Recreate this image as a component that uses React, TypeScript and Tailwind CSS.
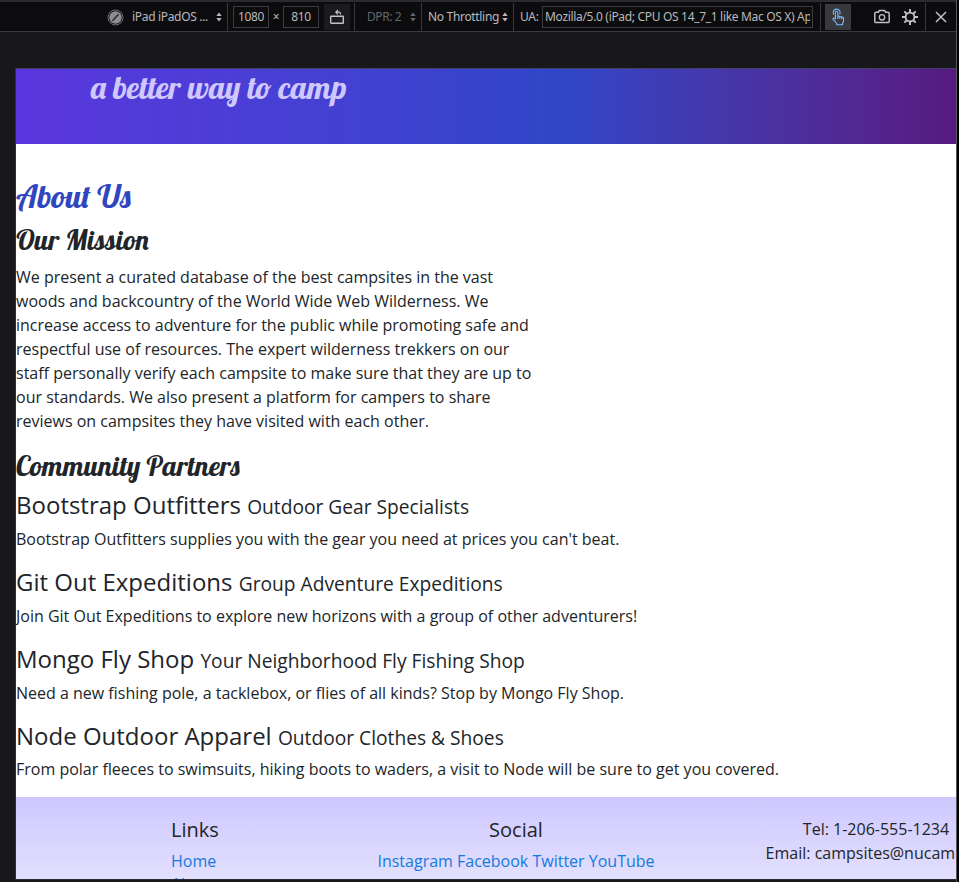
import type { ReactNode } from "react";

const SCRIPT = "font-['Lobster','Liberation_Serif',serif] font-medium";

const partners = [
  { name: "Bootstrap Outfitters", tag: "Outdoor Gear Specialists", text: "Bootstrap Outfitters supplies you with the gear you need at prices you can't beat." },
  { name: "Git Out Expeditions", tag: "Group Adventure Expeditions", text: "Join Git Out Expeditions to explore new horizons with a group of other adventurers!" },
  { name: "Mongo Fly Shop", tag: "Your Neighborhood Fly Fishing Shop", text: "Need a new fishing pole, a tacklebox, or flies of all kinds? Stop by Mongo Fly Shop." },
  { name: "Node Outdoor Apparel", tag: "Outdoor Clothes & Shoes", text: "From polar fleeces to swimsuits, hiking boots to waders, a visit to Node will be sure to get you covered." },
];

const mission = [
  "We present a curated database of the best campsites in the vast",
  "woods and backcountry of the World Wide Web Wilderness. We",
  "increase access to adventure for the public while promoting safe and",
  "respectful use of resources. The expert wilderness trekkers on our",
  "staff personally verify each campsite to make sure that they are up to",
  "our standards. We also present a platform for campers to share",
  "reviews on campsites they have visited with each other.",
];

function Sort() {
  return (
    <svg width="6" height="10" viewBox="0 0 6 10" fill="currentColor" className="shrink-0">
      <path d="M3 0.5 5.7 4H.3zM3 9.5 .3 6h5.4z" />
    </svg>
  );
}

function Divider() {
  return <div className="h-7 w-px shrink-0 self-end bg-[#38383d]" />;
}

function Field({ children, className }: { children: ReactNode; className: string }) {
  return (
    <div className={`flex h-[22px] shrink-0 items-center overflow-hidden border border-[#3c3c42] bg-[#0c0c0d] ${className}`}>
      {children}
    </div>
  );
}

function Toolbar() {
  return (
    <div className="h-8 shrink-0 border-t-2 border-b border-t-[#2a2a30] border-b-[#3a3a3e] bg-[#0c0c0f] font-['Noto_Sans','Open_Sans',sans-serif] text-[12px] tracking-[-0.32px] whitespace-nowrap text-[#b9b9bc]">
      <div className="flex h-[29px] items-center pt-px pl-[107px]">
        <svg width="17" height="17" viewBox="0 0 17 17" fill="none" className="shrink-0">
          <circle cx="8.5" cy="8.5" r="7.5" stroke="#77777a" strokeWidth="1" />
          <circle cx="8.5" cy="8.5" r="6.2" fill="#8e8e90" />
          <path d="M5.5 11.8 11.5 5.2" stroke="#2a2a2d" strokeWidth="1.5" />
        </svg>
        <span className="w-[85px] pl-2">iPad iPadOS ...</span>
        <div className="w-[18px] pl-[7px]"><Sort /></div>
        <Divider />
        <Field className="ml-[5px] w-9 justify-center">1080</Field>
        <span className="w-[14px] text-center">×</span>
        <Field className="w-9 justify-center">810</Field>
        <div className="ml-[5px] flex h-[26px] w-[26px] shrink-0 items-center justify-center bg-[#1b1b1f]">
          <svg width="16" height="16" viewBox="0 0 16 16" fill="none" stroke="#c2c2c4" strokeWidth="1.4">
            <rect x="1.7" y="7.2" width="12.6" height="7.1" rx=".6" />
            <path d="M11.6 5.6V4.9q0-1.7-1.8-1.7H7M9 1 6.8 3.2 9 5.2" strokeWidth="1.2" />
          </svg>
        </div>
        <div className="w-[4px] shrink-0" />
        <Divider />
        <span className="w-[43px] shrink-0 pl-3 tracking-[-0.4px] text-[#65656a]">DPR: 2</span>
        <div className="w-[23px] shrink-0 pl-3 text-[#65656a]"><Sort /></div>
        <Divider />
        <span className="w-[80px] shrink-0 pl-[6px]">No Throttling</span>
        <div className="w-[11px] shrink-0"><Sort /></div>
        <Divider />
        <span className="w-[28px] shrink-0 pl-[6px]">UA:</span>
        <Field className="w-[271px] px-[2px]">
          <span className="block w-[265px] overflow-hidden">Mozilla/5.0 (iPad; CPU OS 14_7_1 like Mac OS X) Ap</span>
        </Field>
        <div className="w-[7px] shrink-0" />
        <Divider />
        <div className="ml-1 flex h-[26px] w-[26px] shrink-0 items-center justify-center bg-[#38383d]">
          <svg width="16" height="18" viewBox="0 0 16 18" fill="none" stroke="#75baff" strokeWidth="1.1" strokeLinejoin="round" strokeLinecap="round">
            <path d="M5.4 11V4.4a1.2 1.2 0 0 1 2.4 0V8.4q1-.7 1.9.3 1.2-.5 1.9.4 1.7-.3 1.9 1.3v2.6q0 1.4-1 2.5v1.2H6.8v-1.2L3.2 11.6q-.7-1.2.4-1.6.8-.2 1.8 1M7.8 8.4v2M9.8 8.8v1.7M11.7 9.2v1.5" />
            <path d="M3.6 6.3a3.5 3.5 0 1 1 6.2-.2" />
          </svg>
        </div>
        <svg width="18" height="16" viewBox="0 0 18 16" fill="none" stroke="#c0c0c3" strokeWidth="1.5" className="ml-[22px] shrink-0">
          <path d="M3 3.2h2.4l1-1.6h5.2l1 1.6H15q1.2 0 1.2 1.2v8q0 1.2-1.2 1.2H3q-1.2 0-1.2-1.2v-8Q1.8 3.2 3 3.2z" />
          <circle cx="9" cy="8.3" r="2.7" strokeWidth="1.3" />
        </svg>
        <svg width="18" height="18" viewBox="0 0 18 18" fill="none" stroke="#c4c4c7" className="ml-[10px] shrink-0">
          <circle cx="9" cy="9" r="4.4" strokeWidth="1.8" />
          <path d="M9 1v3M9 14v3M1 9h3M14 9h3M3.3 3.3l2.2 2.2M12.5 12.5l2.2 2.2M14.7 3.3l-2.2 2.2M5.5 12.5l-2.2 2.2" strokeWidth="1.9" />
        </svg>
        <div className="w-[6px] shrink-0" />
        <Divider />
        <svg width="12" height="12" viewBox="0 0 12 12" stroke="#c0c0c3" strokeWidth="1.5" className="ml-[9px] shrink-0">
          <path d="M1 1 11 11M11 1 1 11" />
        </svg>
      </div>
    </div>
  );
}

export default function App() {
  return (
    <div className="flex h-[882px] w-[959px] overflow-hidden bg-black">
      <div className="flex w-[957px] shrink-0 flex-col border-r border-[#58585e] bg-[#18181a]">
        <Toolbar />
        <div className="mt-9 ml-[15px] h-[812px] w-[941px] shrink-0 overflow-hidden border-t border-b border-l border-t-[#424068] border-b-[#2a2b32] border-l-[#303036] bg-white font-['Open_Sans',sans-serif] text-base leading-6 whitespace-nowrap text-[#212529]">
          <header className="h-[75px] bg-linear-to-r from-[#5a36de] via-[#2f46c8] via-58% to-[#561a80] pl-[75px]">
            <h2 className={`${SCRIPT} text-[32px] leading-[36.4px] text-[#cec8ff]`}>a better way to camp</h2>
          </header>
          <main className="h-[653px] pt-[33px]">
            <h2 className={`${SCRIPT} mb-2 text-[32px] leading-[38.4px] text-[#2f46c0]`}>About Us</h2>
            <h3 className={`${SCRIPT} mb-2 text-[28px] leading-[33.6px]`}>Our Mission</h3>
            <p className="mb-4">
              {mission.map((line) => <span key={line} className="block">{line}</span>)}
            </p>
            <h3 className={`${SCRIPT} mb-2 text-[28px] leading-[33.6px]`}>Community Partners</h3>
            {partners.map((p) => (
              <section key={p.name} className="group mb-4">
                <h4 className="mb-2 h-[28.8px] text-2xl leading-[29.6px] group-first-of-type:leading-[28.4px] group-last-of-type:mb-[7.4px]">{p.name} <small className="text-[19.2px]">{p.tag}</small></h4>
                <p>{p.text}</p>
              </section>
            ))}
          </main>
          <footer className="flex h-[140px] bg-linear-to-b from-[#cec8ff] to-[#f2f0fb] pt-5">
            <div className="w-[340px] shrink-0 pl-[155px]">
              <h5 className="mb-2 h-6 text-xl leading-[26px]">Links</h5>
              <div className="flex flex-col text-[#1479e0]"><a>Home</a><a className="-mt-px">About</a></div>
            </div>
            <div className="w-80 shrink-0 text-center">
              <h5 className="mb-2 h-6 text-xl leading-[26px]">Social</h5>
              <div className="text-[#1479e0]"><a>Instagram</a> <a>Facebook</a> <a>Twitter</a> <a>YouTube</a></div>
            </div>
            <div className="ml-[89px] w-[222px] shrink-0 text-center">
              <div>Tel: 1-206-555-1234</div>
              <div>Email: campsites@nucamp.co</div>
            </div>
          </footer>
        </div>
      </div>
    </div>
  );
}
